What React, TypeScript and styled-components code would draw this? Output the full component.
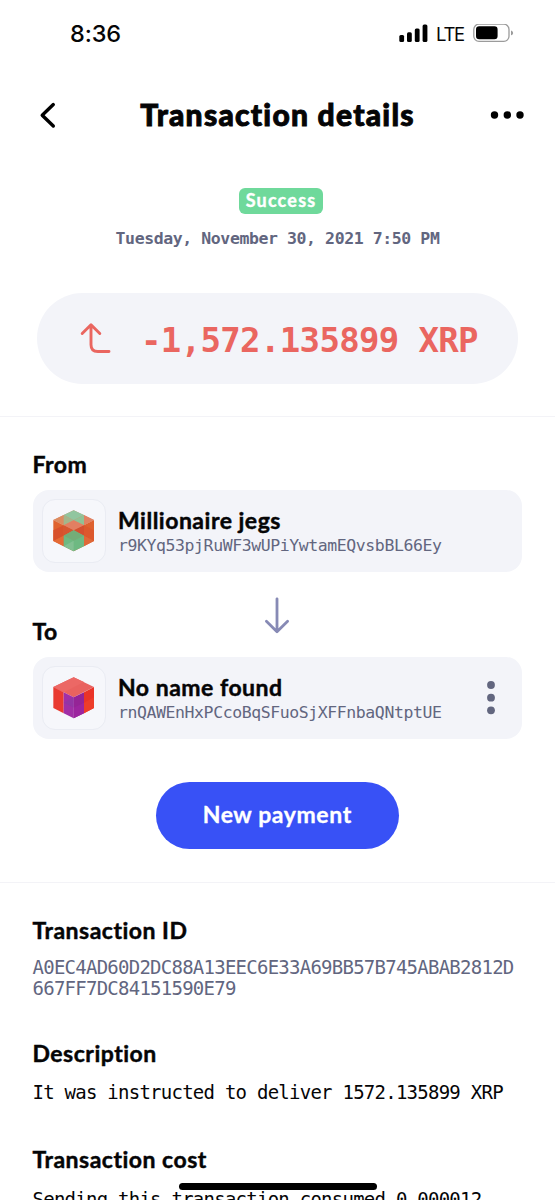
import React from "react";
import styled, { createGlobalStyle } from "styled-components";

const color = {
  ink: "#050506",
  muted: "#62667f",
  panel: "#f3f4f9",
  line: "#f3f3f7",
  red: "#ea6660",
  blue: "#3851f6",
  green: "#6fd99b",
};

const sans = `Lato, "Open Sans", "Liberation Sans", sans-serif`;
const mono = `"DejaVu Sans Mono", "Liberation Mono", monospace`;

const GlobalStyle = createGlobalStyle`
  *, *::before, *::after { box-sizing: border-box; }
  html, body { margin: 0; padding: 0; background: #fff; overflow: hidden; }
  svg { display: block; flex: none; }
`;

const Screen = styled.main`
  position: relative;
  display: flex;
  flex-direction: column;
  width: 555px;
  height: 1200px;
  overflow: hidden;
  background: #fff;
  color: ${color.ink};
  font-family: ${sans};
  font-variant-ligatures: none;
  white-space: nowrap;

  & > * { flex-shrink: 0; }
`;

const StatusBar = styled.div`
  display: flex;
  align-items: center;
  height: 68px;
  padding: 0 41px 0 70px;
  font-family: Inter, sans-serif;
`;

const Clock = styled.time`
  flex: 1;
  font-size: 23.5px;
  font-weight: 500;
  line-height: 28px;
  letter-spacing: -0.1px;
`;

const Network = styled.span`
  width: 28px;
  margin: 0 9px 0 7px;
  font-size: 18.5px;
  line-height: 24px;
  letter-spacing: -1.3px;
`;

const Header = styled.header`
  display: flex;
  align-items: center;
  justify-content: space-between;
  height: 94px;
  padding: 0 30px 0 39px;
`;

const Title = styled.h1`
  margin: 0 0 3px 9px;
  font-size: 30px;
  font-weight: 900;
  line-height: 36px;
  letter-spacing: 1.25px;
  -webkit-text-stroke: 0.9px currentColor;
`;

const IconButton = styled.button`
  display: flex;
  padding: 0;
  border: 0;
  background: none;
`;

const Summary = styled.section`
  display: flex;
  flex-direction: column;
  align-items: center;
  height: 255px;
  padding-top: 25.5px;
  border-bottom: 1px solid ${color.line};
`;

const Badge = styled.span`
  width: 84px;
  height: 26px;
  margin-left: 6px;
  border-radius: 6px;
  background: ${color.green};
  color: #fff;
  font-size: 18px;
  font-weight: 700;
  line-height: 25px;
  letter-spacing: 1.2px;
  text-indent: 1px;
  text-align: center;
  -webkit-text-stroke: 0.4px currentColor;
`;

const DateText = styled.time`
  margin-top: 14.5px;
  color: ${color.muted};
  font-family: ${mono};
  font-size: 16.5px;
  font-weight: 700;
  line-height: 22px;
  letter-spacing: -0.41px;
`;

const AmountPill = styled.div`
  display: flex;
  align-items: center;
  width: 481px;
  height: 91.5px;
  margin-top: 42.5px;
  padding-left: 43px;
  border-radius: 46px;
  background: ${color.panel};
  color: ${color.red};
`;

const Amount = styled.span`
  margin: 3px 0 0 27px;
  font-family: ${mono};
  font-size: 34px;
  font-weight: 700;
  line-height: 44px;
  letter-spacing: -0.65px;
`;

const Parties = styled.section`
  display: flex;
  flex-direction: column;
  height: 466px;
  padding: 32px 33px 0 32.5px;
  border-bottom: 1px solid ${color.line};
`;

const Label = styled.h2`
  margin: 0;
  font-size: 23px;
  font-weight: 700;
  line-height: 30px;
  letter-spacing: 0.5px;
  -webkit-text-stroke: 0.45px currentColor;
`;

const ToRow = styled.div`
  display: grid;
  grid-template-columns: 1fr auto 1fr;
  height: 78px;
  padding-top: 23.5px;
`;

const ToLabel = styled(Label)`
  margin-top: 20.5px;
`;

const Card = styled.article`
  display: flex;
  align-items: center;
  height: 82px;
  padding: 0 22px 0 9px;
  border-radius: 16px;
  background: ${color.panel};
`;

const FromCard = styled(Card)`
  margin-top: 11px;
`;

const ToCard = styled(Card)`
  margin-top: 7px;
`;

const Avatar = styled.div`
  display: flex;
  align-items: center;
  justify-content: center;
  width: 64px;
  height: 64px;
  border: 1.5px solid #eaecf3;
  border-radius: 13px;
  background: #f6f7fb;
`;

const Person = styled.div`
  flex: 1;
  margin: 1px 0 0 12.5px;
`;

const Name = styled.div`
  font-size: 23px;
  font-weight: 700;
  line-height: 28px;
  letter-spacing: 0.5px;
  -webkit-text-stroke: 0.45px currentColor;
`;

const Address = styled.div`
  margin-top: 1px;
  color: ${color.muted};
  font-family: ${mono};
  font-size: 16.5px;
  line-height: 22px;
  letter-spacing: -0.42px;
`;

const PayButton = styled.button`
  align-self: center;
  width: 243px;
  height: 67px;
  margin-top: 42.5px;
  padding: 0 0 3px;
  border: 0;
  border-radius: 34px;
  background: ${color.blue};
  color: #fff;
  font-family: ${sans};
  font-size: 23px;
  font-weight: 700;
  line-height: 64px;
  letter-spacing: 0.6px;
  -webkit-text-stroke: 0.3px currentColor;
`;

const Details = styled.section`
  display: flex;
  flex-direction: column;
  padding: 31.5px 32.5px 0;
`;

const Entry = styled.div<{ $gap?: number }>`
  margin-bottom: ${(p) => p.$gap ?? 0}px;
`;

const Value = styled.div<{ $muted?: boolean }>`
  margin-top: ${(p) => (p.$muted ? 12 : 14.5)}px;
  color: ${(p) => (p.$muted ? color.muted : color.ink)};
  font-family: ${mono};
  font-size: 19px;
  line-height: 21px;
  letter-spacing: -0.75px;
`;

const HomeIndicator = styled.div`
  position: absolute;
  bottom: 10.5px;
  left: 178.5px;
  width: 198.5px;
  height: 6.5px;
  border-radius: 4px;
  background: #000;
`;

const Signal = () => (
  <svg width="30" height="20" viewBox="0 0 30 20" fill="#000">
    <rect x="0.3" y="11" width="4.8" height="7" rx="1.5" />
    <rect x="8" y="8.2" width="4.8" height="9.8" rx="1.5" />
    <rect x="15.8" y="4.5" width="4.8" height="13.5" rx="1.5" />
    <rect x="23.6" y="0.5" width="4.8" height="17.5" rx="1.5" />
  </svg>
);

const Battery = () => (
  <svg width="41" height="20" viewBox="0 0 41 20">
    <rect x="0.8" y="0.2" width="35.2" height="17.2" rx="5.2" fill="none" stroke="#9b9b9b" strokeWidth="1.3" />
    <rect x="3" y="2.3" width="21.6" height="13" rx="3.2" fill="#000" />
    <path d="M38 6.5c1.4.6 2.1 1.3 2.1 2.4s-.7 1.8-2.1 2.4z" fill="#9b9b9b" />
  </svg>
);

const BackIcon = () => (
  <svg width="18" height="28" viewBox="0 0 18 28" fill="none" stroke="#000" strokeWidth="3.4" strokeLinecap="round" strokeLinejoin="round">
    <path d="M14.3 3.6 3.2 14.2l11.1 10.8" />
  </svg>
);

const MoreIcon = () => (
  <svg width="36" height="10" viewBox="0 0 36 10" fill="#000">
    <circle cx="5.5" cy="5" r="3.7" />
    <circle cx="18.3" cy="5" r="3.7" />
    <circle cx="31" cy="5" r="3.7" />
  </svg>
);

const SentIcon = () => (
  <svg width="34" height="34" viewBox="0 0 34 34" fill="none" stroke="currentColor" strokeWidth="2.9" strokeLinecap="round" strokeLinejoin="round">
    <path d="M2.2 12.5 11 3.7 19.8 12.5M11 4.3v19.4q0 6.8 6.8 6.8H29" />
  </svg>
);

const DownIcon = () => (
  <svg width="28" height="38" viewBox="0 0 28 38" fill="none" stroke="#878ab5" strokeWidth="2.8" strokeLinecap="round" strokeLinejoin="round">
    <path d="M14 2.8v33M3.4 25.3 14 35.8l10.6-10.5" />
  </svg>
);

const CardMenuIcon = () => (
  <svg width="18" height="36" viewBox="0 0 18 36" fill={color.muted}>
    <circle cx="9" cy="5" r="3.9" />
    <circle cx="9" cy="17.7" r="3.9" />
    <circle cx="9" cy="30.3" r="3.9" />
  </svg>
);

const GreenCube = () => (
  <svg width="42" height="42" viewBox="38 41 126 126">
    <path d="M100 42 161 71 100 102 39 71z" fill="#df8a68" />
    <path d="M39 71 100 102V165L39 134z" fill="#e0632f" />
    <path d="M161 71 100 102V165L161 134z" fill="#de612f" />
    <path d="M39 71 70 56V87z" fill="#dc8c61" />
    <path d="M161 71 131 56V87z" fill="#e18263" />
    <path d="M100 42 131 56 100 72 70 56z" fill="#91c69f" />
    <path d="M70 56 100 72 70 87z" fill="#a2b68c" />
    <path d="M131 56 100 72 131 87z" fill="#8fc296" />
    <path d="M100 72 131 87 100 102 70 87z" fill="#e27f62" />
    <path d="M39 102 70 87V118L39 134z" fill="#d8512c" />
    <path d="M161 102 131 87V118L161 134z" fill="#dc582d" />
    <path d="M70 87 100 102 70 118z" fill="#d65631" />
    <path d="M131 87 100 102 131 118z" fill="#d35030" />
    <path d="M39 134 70 118V150z" fill="#e46a35" />
    <path d="M161 134 131 118V150z" fill="#df6838" />
    <path d="M100 102 131 118V150L100 165 70 150V118z" fill="#6eb982" />
    <path d="M70 118 100 133 131 118 100 102z" fill="#74ad78" />
    <path d="M100 133V165L70 150z" fill="#82c092" />
  </svg>
);

const RedCube = () => (
  <svg width="42" height="42" viewBox="38 41 126 126">
    <path d="M100 42 161 71 100 102 39 71z" fill="#e9625f" />
    <path d="M100 42 131 56 70 87 39 71z" fill="#ec6865" />
    <path d="M39 71 70 87V150L39 134z" fill="#e93a30" />
    <path d="M161 71 131 87V150L161 134z" fill="#ea3328" />
    <path d="M161 102 131 118V150L161 134z" fill="#ed3d2a" />
    <path d="M70 87 100 102V165L70 150z" fill="#a02fa6" />
    <path d="M131 87 100 102V165L131 150z" fill="#952496" />
    <path d="M70 118 100 102V133z" fill="#9235a5" />
    <path d="M100 133 131 118V150L100 165z" fill="#9c259f" />
  </svg>
);

export default function App() {
  return (
    <>
      <GlobalStyle />
      <Screen>
        <StatusBar>
          <Clock>8:36</Clock>
          <Signal />
          <Network>LTE</Network>
          <Battery />
        </StatusBar>
        <Header>
          <IconButton aria-label="Back"><BackIcon /></IconButton>
          <Title>Transaction details</Title>
          <IconButton aria-label="More"><MoreIcon /></IconButton>
        </Header>
        <Summary>
          <Badge>Success</Badge>
          <DateText>Tuesday, November 30, 2021 7:50 PM</DateText>
          <AmountPill>
            <SentIcon />
            <Amount>-1,572.135899 XRP</Amount>
          </AmountPill>
        </Summary>
        <Parties>
          <Label>From</Label>
          <FromCard>
            <Avatar><GreenCube /></Avatar>
            <Person>
              <Name>Millionaire jegs</Name>
              <Address>r9KYq53pjRuWF3wUPiYwtamEQvsbBL66Ey</Address>
            </Person>
          </FromCard>
          <ToRow>
            <ToLabel>To</ToLabel>
            <DownIcon />
          </ToRow>
          <ToCard>
            <Avatar><RedCube /></Avatar>
            <Person>
              <Name>No name found</Name>
              <Address>rnQAWEnHxPCcoBqSFuoSjXFFnbaQNtptUE</Address>
            </Person>
            <IconButton aria-label="Account options"><CardMenuIcon /></IconButton>
          </ToCard>
          <PayButton>New payment</PayButton>
        </Parties>
        <Details>
          <Entry $gap={39}>
            <Label>Transaction ID</Label>
            <Value $muted>
              A0EC4AD60D2DC88A13EEC6E33A69BB57B745ABAB2812D<br />667FF7DC84151590E79
            </Value>
          </Entry>
          <Entry $gap={41}>
            <Label>Description</Label>
            <Value>It was instructed to deliver 1572.135899 XRP</Value>
          </Entry>
          <Entry>
            <Label>Transaction cost</Label>
            <Value>Sending this transaction consumed 0.000012</Value>
          </Entry>
        </Details>
        <HomeIndicator />
      </Screen>
    </>
  );
}
